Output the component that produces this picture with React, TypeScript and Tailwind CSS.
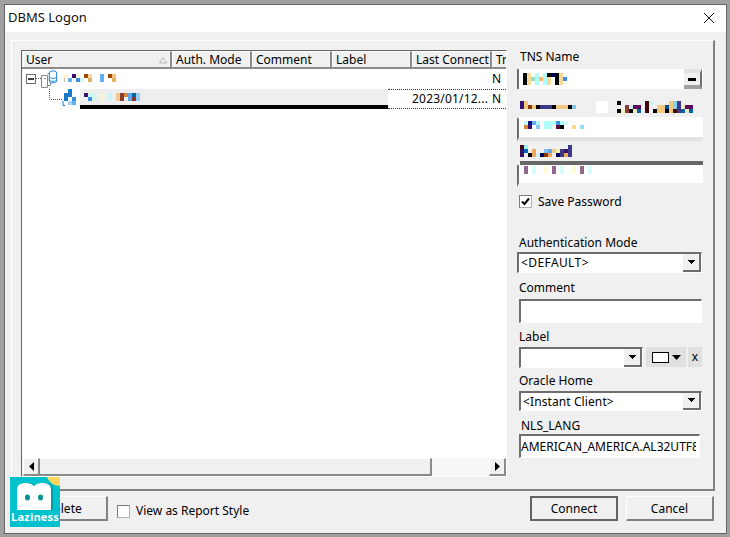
type Cell = [number, number, number, number, string];

function Mosaic({ w, h, cells }: { w: number; h: number; cells: Cell[] }) {
  return (
    <svg width={w} height={h} className="block shrink-0" shapeRendering="crispEdges">
      {cells.map(([x, y, cw, ch, c], i) => (
        <rect key={i} x={x} y={y} width={cw} height={ch} fill={c} />
      ))}
    </svg>
  );
}

const rootName: Cell[] = [
  [0, 1, 4, 4, '#fdf3d0'], [8, 1, 4, 4, '#3b0f6b'], [12, 1, 4, 4, '#f8f8d8'], [20, 1, 4, 4, '#9c4a00'], [24, 1, 4, 4, '#ffd9a0'],
  [36, 1, 4, 8, '#64b0f8'], [44, 1, 4, 4, '#a04800'], [48, 1, 4, 4, '#f8c080'],
  [0, 5, 1, 4, '#c8c0a0'], [4, 5, 4, 4, '#64b0f0'], [12, 5, 4, 4, '#3a90dc'], [16, 5, 4, 4, '#d0f4f8'], [24, 5, 4, 4, '#e0b060'], [48, 5, 4, 4, '#e8b060'],
];

const userName: Cell[] = [
  [0, 0, 4, 4, '#3a1070'], [4, 0, 8, 8, '#d0f4f0'], [4, 4, 4, 4, '#3a90dc'], [16, 0, 4, 8, '#f4f4d8'], [24, 0, 4, 8, '#d0f4f4'],
  [32, 0, 4, 8, '#f0c890'], [36, 0, 4, 8, '#903a30'], [40, 0, 4, 4, '#d08838'], [44, 0, 4, 8, '#58a8e8'], [48, 0, 4, 4, '#1060a8'],
  [48, 4, 4, 4, '#903030'], [52, 0, 4, 8, '#90d0f0'],
];

const tnsValue: Cell[] = [
  [0, 0, 4, 12, '#000000'], [4, 0, 4, 12, '#f8d898'], [8, 4, 4, 4, '#90e0c0'], [12, 0, 4, 12, '#b0fcf8'], [16, 4, 4, 4, '#f8b870'],
  [20, 0, 4, 12, '#b0fcf8'], [24, 0, 4, 12, '#f8d898'], [24, 0, 4, 4, '#000000'], [28, 0, 4, 4, '#00005a'], [32, 0, 4, 12, '#000000'], [36, 0, 4, 12, '#f8d898'], [40, 4, 4, 4, '#3a90dc'],
];

const serverLabelA: Cell[] = [
  [0, 0, 4, 8, '#3a1070'], [4, 0, 4, 8, '#f0c880'], [8, 4, 4, 4, '#8c3c00'], [12, 4, 4, 4, '#f0c880'], [16, 4, 4, 4, '#000000'],
  [20, 4, 12, 4, '#3a3a88'], [32, 4, 4, 4, '#000000'], [36, 4, 12, 4, '#f0c880'], [48, 4, 4, 4, '#000000'], [52, 4, 4, 4, '#80c8f0'],
  [76, 0, 12, 12, '#ffffff'],
];

const serverLabelB: Cell[] = [
  [0, 0, 4, 4, '#000000'], [0, 8, 4, 4, '#000000'], [4, 8, 4, 4, '#f4f0c0'], [8, 4, 4, 8, '#884038'], [12, 4, 4, 4, '#d0f0f0'], [12, 8, 4, 4, '#000000'],
  [16, 4, 8, 4, '#5a0a58'], [16, 8, 4, 4, '#f0e8c0'], [20, 8, 4, 4, '#0060a8'],
  [28, 0, 4, 12, '#400808'], [32, 0, 4, 4, '#c8f0f0'], [36, 8, 4, 4, '#000000'], [40, 4, 8, 8, '#f0c880'], [48, 4, 4, 4, '#0a4898'], [48, 8, 4, 4, '#000000'],
  [52, 0, 4, 12, '#f0c880'], [56, 0, 4, 8, '#88d0f0'], [56, 8, 4, 4, '#400808'], [60, 0, 4, 12, '#3a3a88'], [64, 4, 4, 4, '#f0e8c0'], [64, 8, 4, 4, '#0060a8'], [68, 4, 8, 4, '#5a0a58'], [68, 8, 4, 4, '#f0e8c0'], [72, 8, 4, 4, '#0060a8'],
];

const serviceValue: Cell[] = [
  [0, 0, 4, 4, '#c0fcf8'], [4, 0, 4, 4, '#10107a'], [8, 0, 4, 4, '#60b0f8'], [12, 0, 4, 4, '#b0f8f8'], [0, 4, 4, 4, '#d88830'], [4, 4, 4, 4, '#3a1070'], [12, 4, 4, 4, '#88ccf8'],
  [20, 0, 8, 8, '#b0fcf8'], [28, 0, 4, 4, '#b0fcf8'], [32, 0, 4, 4, '#3a90dc'], [36, 0, 4, 4, '#b0f8f8'], [40, 0, 4, 4, '#d8fcfc'], [28, 4, 4, 4, '#f8f8f8'], [32, 4, 4, 4, '#600840'], [36, 4, 4, 4, '#000000'],
  [48, 4, 4, 4, '#fcd890'], [56, 4, 4, 4, '#98d8f8'],
];

const passwordLabel: Cell[] = [
  [0, 0, 4, 12, '#3a1060'], [0, 0, 4, 4, '#400808'], [4, 0, 4, 4, '#a0f0f0'], [4, 4, 4, 4, '#0068b0'], [8, 8, 4, 4, '#000000'], [12, 4, 4, 8, '#f0a860'],
  [16, 8, 4, 4, '#c8f0f0'], [20, 8, 4, 4, '#00005a'], [24, 4, 4, 4, '#80c0f0'], [24, 8, 4, 4, '#8c3c00'], [28, 4, 4, 4, '#60a8e8'], [28, 8, 4, 4, '#f0a860'],
  [32, 4, 4, 4, '#f0d090'], [36, 4, 4, 4, '#f4f0b0'], [36, 8, 4, 4, '#00005a'], [40, 4, 4, 8, '#3a3a88'], [44, 4, 4, 4, '#3a1060'], [44, 8, 4, 4, '#f0a860'], [48, 0, 4, 12, '#3a3a88'],
];

const passwordDots: Cell[] = [
  [0, 0, 4, 8, '#906890'], [8, 0, 4, 8, '#d8fcfc'], [20, 0, 4, 8, '#fcfcd8'], [28, 0, 4, 8, '#906890'], [36, 0, 4, 8, '#d8fcfc'], [48, 0, 4, 8, '#fcfcd8'], [56, 0, 4, 8, '#906890'], [64, 0, 4, 8, '#d8fcfc'],
];

function DownArrow() {
  return (
    <svg width="9" height="5" viewBox="0 0 9 5" className="block" shapeRendering="crispEdges">
      <path d="M1 0h7v1H7v1H6v1H5v1H4V3H3V2H2V1H1z" fill="#000" />
    </svg>
  );
}

function Combo({ value, className, valueClass = '' }: { value?: string; className: string; valueClass?: string }) {
  return (
    <div className={`flex items-stretch border-t-2 border-r border-b border-l-2 border-t-[#6e6e6e] border-r-white border-b-white border-l-[#6e6e6e] bg-white ${className}`}>
      <span className={`flex-1 pl-[2px] leading-[18px] whitespace-nowrap ${valueClass}`}>{value}</span>
      <span className="flex w-[18px] items-center justify-center border-r-2 border-b-2 border-[#6e6e6e] bg-[#f0f0f0]">
        <DownArrow />
      </span>
    </div>
  );
}

function HeaderCell({ label, className, children }: { label: string; className: string; children?: React.ReactNode }) {
  return (
    <div className={`flex items-center justify-between overflow-hidden border-t border-l border-t-white border-l-white bg-[#f0f0f0] pt-px whitespace-nowrap ${className}`}>
      {label}
      {children}
    </div>
  );
}

function Checkbox({ checked }: { checked?: boolean }) {
  return (
    <span className="flex h-[13px] w-[13px] shrink-0 items-center justify-center border-t border-r border-b border-l border-t-[#7a7a7a] border-r-[#b0b0b0] border-b-[#b0b0b0] border-l-[#7a7a7a] bg-white">
      {checked && (
        <svg width="9" height="9" viewBox="0 0 9 9">
          <path d="M1 4.500 3.500 7 8 1.500" fill="none" stroke="#000" strokeWidth="2" />
        </svg>
      )}
    </span>
  );
}

function ScrollArrow({ dir }: { dir: 'left' | 'right' }) {
  return (
    <span className="flex h-full w-[17px] shrink-0 items-center justify-center border-t border-r-2 border-b-2 border-l border-t-white border-r-[#8a8a8a] border-b-[#8a8a8a] border-l-white bg-[#f0f0f0]">
      <svg width="5" height="9" viewBox="0 0 5 9">
        <path d={dir === 'left' ? 'M5 0v9L0 4.500z' : 'M0 0v9l5-4.500z'} fill="#000" />
      </svg>
    </span>
  );
}

function Button({ label, className }: { label: string; className: string }) {
  return (
    <button className={`flex h-[25px] items-center justify-center bg-[#f0f0f0] ${className}`}>{label}</button>
  );
}

const sunken = 'border-t-2 border-r border-b border-l-2 border-t-[#6e6e6e] border-r-white border-b-white border-l-[#6e6e6e] bg-white';
const raised = 'border-t border-r-2 border-b-2 border-l border-t-white border-r-[#808080] border-b-[#808080] border-l-white';

export default function App() {
  return (
    <div className="h-[537px] w-[730px] overflow-hidden bg-[#a0a0a0] pt-1 pr-[3px] pb-[3px] pl-1 font-['Noto_Sans',sans-serif] text-[12px] leading-[14px] text-black">
      <div className="relative flex h-full flex-col border border-[#646464] bg-[#f0f0f0]">
        <div className="flex h-[27px] shrink-0 items-start justify-between bg-white pt-[3px] pr-[11px] pl-[3px] text-[13px] leading-[18px] text-[#111]">
          <span>DBMS Logon</span>
          <svg width="12" height="12" viewBox="0 0 12 12" className="mt-[4px]">
            <path d="M1 1l10 10M11 1 1 11" stroke="#111" strokeWidth="1" fill="none" />
          </svg>
        </div>

        <div className={`mt-[8px] ml-[6px] flex h-[451px] w-[704px] shrink-0 pt-[9px] pl-[9px] ${raised}`}>
          {/* connection list */}
          <div className="flex h-[427px] w-[486px] shrink-0 flex-col border-t border-r border-b border-l border-t-[#646464] border-r-white border-b-white border-l-[#646464]">
            <div className="flex h-[18px] shrink-0 border-b-2 border-[#8a8a8a] pl-px">
              <HeaderCell label="User" className="w-[149px] border-r-2 border-r-[#8a8a8a] pr-[3px] pl-[2px]">
                <svg width="8" height="7" viewBox="0 0 8 7">
                  <path d="M4 .5 7.500 6H.5z" fill="none" stroke="#b8b8b8" />
                </svg>
              </HeaderCell>
              <HeaderCell label="Auth. Mode" className="w-[80px] border-r-2 border-r-[#8a8a8a] pl-[3px]" />
              <HeaderCell label="Comment" className="w-[80px] border-r-2 border-r-[#8a8a8a] pl-[3px]" />
              <HeaderCell label="Label" className="w-[80px] border-r-2 border-r-[#8a8a8a] pl-[3px]" />
              <HeaderCell label="Last Connect" className="w-[80px] border-r-2 border-r-[#8a8a8a] pl-[3px]" />
              <HeaderCell label="Tr" className="flex-1 pl-[3px]" />
            </div>

            <div className="flex-1 overflow-hidden bg-white">
              <div className="flex h-[20px] items-center pl-[4px]">
                <svg width="36" height="20" viewBox="0 0 36 20" className="shrink-0">
                  <rect x=".5" y="5.500" width="9" height="9" fill="#fff" stroke="#6e6e6e" />
                  <path d="M2 10h6" stroke="#000" strokeWidth="1.500" />
                  <path d="M10 9.500h5" stroke="#555" strokeDasharray="1 1" />
                  <path d="M15.500 6.500h6v12h-6zM21.500 4.500h3v12h-3M18 9.500h2" fill="none" stroke="#8a8a8a" />
                  <ellipse cx="27" cy="4" rx="3.700" ry="2.200" fill="#fff" stroke="#1c84d8" />
                  <path d="M23.300 4v8c0 2.500 7.400 2.500 7.400 0V4M23.300 7.500c0 2.500 7.400 2.500 7.400 0M23.300 10.500c0 2.500 7.400 2.500 7.400 0" fill="#fff" stroke="#1c84d8" />
                </svg>
                <div className="-mt-[4px] ml-[2px] w-[348px]">
                  <Mosaic w={52} h={9} cells={rootName} />
                </div>
                <span className="ml-[80px]">N</span>
              </div>

              <div className="flex h-[20px] pl-[27px]">
                <svg width="31" height="20" viewBox="0 0 31 20" className="shrink-0">
                  <path d="M.5 0v10.500H13" fill="none" stroke="#555" strokeDasharray="1 1" />
                  <path d="M19 0h4v4h-4zM15 4h8v4h-8zM15 8h4v4h-4z" fill="#1a78c8" />
                  <path d="M23 8h4v4h-4z" fill="#3a90dc" />
                  <path d="M19 12h4v4h-4z" fill="#a8d0f0" />
                  <path d="M23 12h4v4h-4z" fill="#64b0f0" />
                  <path d="M14 12v4.500h2" fill="none" stroke="#1a78c8" />
                </svg>
                <div className="h-[20px] w-[308px] shrink-0 border-b-4 border-black bg-[#eeeeee] pt-[4px] pl-[4px]">
                  <Mosaic w={56} h={8} cells={userName} />
                </div>
                <div className="flex h-[20px] flex-1 items-center justify-between border-t border-b border-dotted border-[#333] bg-white pr-[5px] pl-[24px]">
                  <span className="tracking-[0.2px]">2023/01/12...</span>
                  <span>N</span>
                </div>
              </div>
            </div>

            <div className="flex h-[18px] shrink-0 items-stretch bg-[#f0f0f0] pl-px">
              <ScrollArrow dir="left" />
              <div className="w-[392px] shrink-0 border-t border-r-2 border-b-2 border-t-white border-r-[#8a8a8a] border-b-[#8a8a8a]" />
              <div className="flex-1 bg-[repeating-conic-gradient(#f0f0f0_0_25%,#ffffff_0_50%)] bg-[length:2px_2px]" />
              <ScrollArrow dir="right" />
            </div>
          </div>

          {/* connection form */}
          <div className="ml-[10px] flex w-[186px] shrink-0 flex-col">
            <div className="ml-[3px]">TNS Name</div>
            <div className="mt-[5px] flex h-[20px] w-[186px] items-center border-l-2 border-l-[#6e6e6e] bg-white pl-[4px]">
              <div className="flex-1">
                <Mosaic w={44} h={12} cells={tnsValue} />
              </div>
              <span className="mr-px flex h-full w-[18px] flex-col items-center justify-center border-t-[4px] border-r-2 border-b-4 border-t-[#e3e3e3] border-r-[#6e6e6e] border-b-[#a0a0a0] bg-[#f0f0f0]">
                <span className="h-[3px] w-[8px] bg-black" />
              </span>
            </div>

            <div className="mt-[12px] ml-[3px] flex h-[12px]">
              <Mosaic w={97} h={12} cells={serverLabelA} />
              <Mosaic w={76} h={12} cells={serverLabelB} />
            </div>
            <div className="mt-[4px] h-[24px] w-[186px] border-t-2 border-b-4 border-l-2 border-t-white border-b-[#e3e3e3] border-l-[#6e6e6e] bg-white pt-[2px] pl-[5px]">
              <Mosaic w={60} h={8} cells={serviceValue} />
            </div>

            <div className="mt-[4px] ml-[3px] h-[12px]">
              <Mosaic w={52} h={12} cells={passwordLabel} />
            </div>
            <div className="mt-[4px] ml-[3px] h-[4px] bg-[#666666]" />
            <div className="h-[22px] w-[186px] border-b-4 border-l-2 border-b-[#f0f0f0] border-l-[#6e6e6e] bg-white pt-[1px] pl-[5px]">
              <Mosaic w={68} h={8} cells={passwordDots} />
            </div>

            <label className="mt-[8px] ml-[2px] flex h-[13px] items-center gap-[6px]">
              <Checkbox checked />
              Save Password
            </label>

            <div className="mt-[28px] ml-[2px]">Authentication Mode</div>
            <Combo value="<DEFAULT>" valueClass="tracking-[0.4px]" className="mt-[2px] h-[21px] w-[185px]" />

            <div className="mt-[8px] ml-[2px]">Comment</div>
            <div className={`mt-[4px] ml-[2px] h-[24px] w-[183px] ${sunken}`} />

            <div className="mt-[7px] ml-[2px]">Label</div>
            <div className="mt-[3px] ml-[2px] flex h-[21px]">
              <Combo className="h-[21px] w-[124px] shrink-0" />
              <span className="ml-[3px] flex h-[20px] w-[40px] items-center justify-center gap-[3px] bg-[#e0e0e0]">
                <span className="h-[11px] w-[17px] border border-black bg-white" />
                <svg width="9" height="5" viewBox="0 0 9 5">
                  <path d="M0 0h9L4.500 5z" fill="#000" />
                </svg>
              </span>
              <span className="ml-[2px] flex h-[20px] w-[14px] items-center justify-center bg-[#e0e0e0] leading-none">x</span>
            </div>

            <div className="mt-[6px] ml-[2px]">Oracle Home</div>
            <Combo value="<Instant Client>" valueClass="tracking-[0.1px]" className="mt-[3px] ml-[2px] h-[20px] w-[183px]" />

            <div className="mt-[8px] ml-[4px]">NLS_LANG</div>
            <div className={`mt-[1px] ml-[2px] flex h-[24px] w-[181px] items-center overflow-hidden ${sunken}`}>
              <span className="w-[175px] overflow-hidden whitespace-nowrap">AMERICAN_AMERICA.AL32UTF8</span>
            </div>
          </div>
        </div>

        <div className="mt-[5px] ml-[17px] flex w-[692px] items-center">
          <Button label="Delete" className={`w-[86px] pt-px pr-[2px] ${raised}`} />
          <label className="mt-[5px] ml-[9px] flex items-center gap-[6px]">
            <Checkbox />
            View as Report Style
          </label>
          <Button label="Connect" className="ml-auto w-[88px] border-2 border-[#646464]" />
          <Button label="Cancel" className={`ml-[8px] w-[88px] pt-px ${raised}`} />
        </div>

        {/* watermark over the dialog */}
        <div className="absolute top-[472px] left-[5px] flex h-[50px] w-[50px] flex-col items-center overflow-hidden bg-[#00c2cc]">
          <svg width="50" height="50" viewBox="0 0 50 50" className="absolute top-0 left-0">
            <path d="M37 0h13v9C44 9 39 5 37 0z" fill="#ffd75e" />
            <path d="M9 33V13c0-5 3-7 9-7 3 0 6 1 8 3 2-2 5-3 8-3 6 0 9 2 9 7v20z" fill="#007f8a" opacity=".55" />
            <path d="M7 33V13c0-5 3-7 9-7 3 0 6 1 8 3 2-2 5-3 8-3 6 0 9 2 9 7v20z" fill="#fff" />
            <ellipse cx="17.500" cy="20.500" rx="2.500" ry="3" fill="#0d8f98" />
            <ellipse cx="30.500" cy="20.500" rx="2.500" ry="3" fill="#0d8f98" />
          </svg>
          <span className="relative mt-[33px] font-['Open_Sans',sans-serif] text-[11px] leading-[14px] font-bold tracking-[0.2px] text-white">Laziness</span>
        </div>
      </div>
    </div>
  );
}
